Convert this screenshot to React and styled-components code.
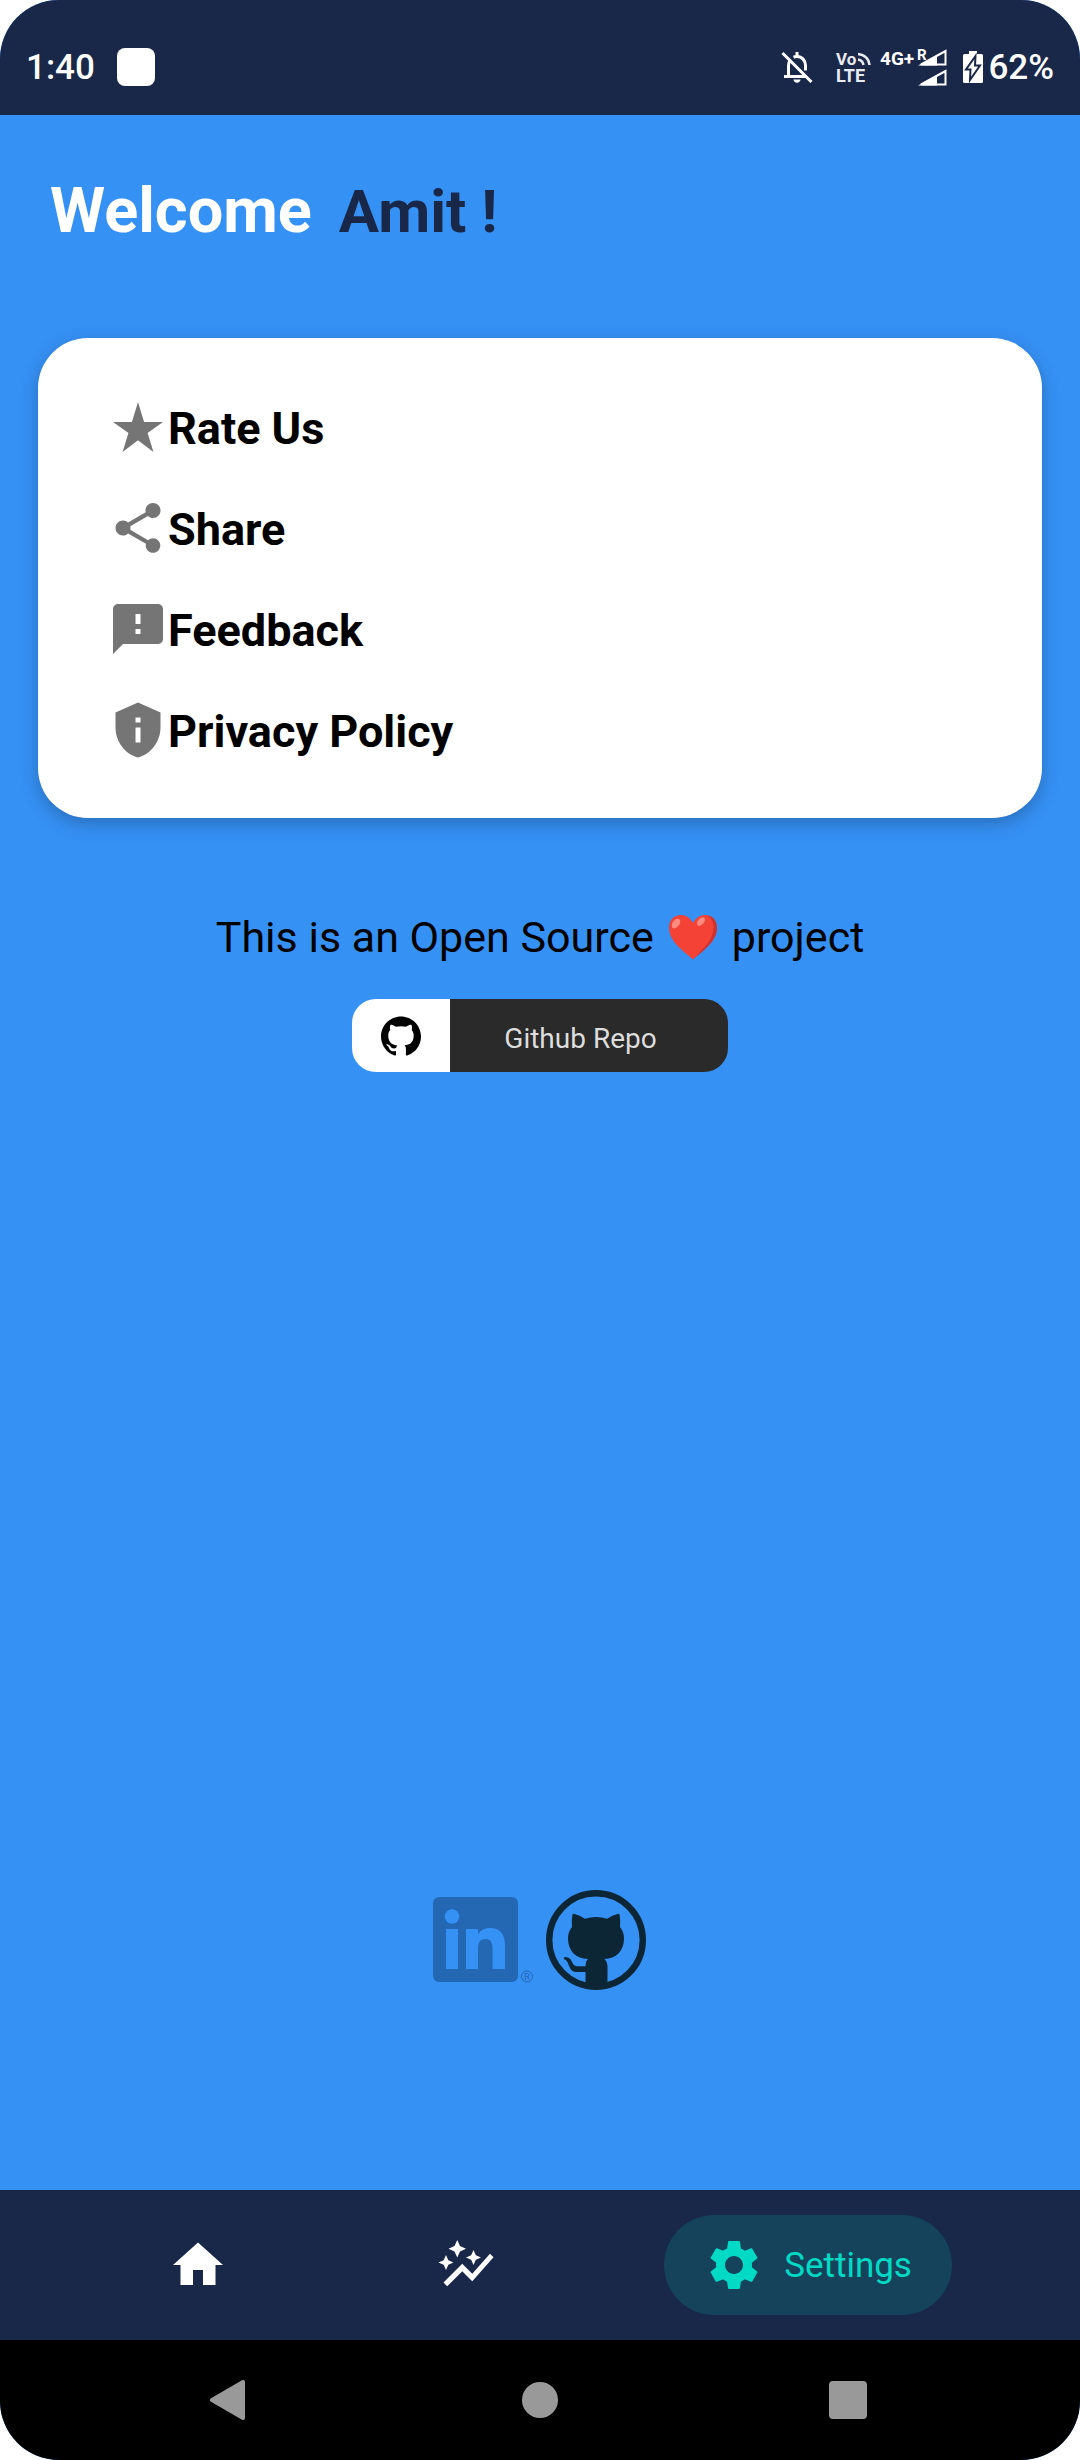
import React from 'react';
import styled, { createGlobalStyle } from 'styled-components';
import {
  MdStarRate,
  MdShare,
  MdFeedback,
  MdPrivacyTip,
  MdHome,
  MdAutoGraph,
  MdSettings,
} from 'react-icons/md';

const color = {
  navy: '#192849',
  blue: '#3691f5',
  white: '#ffffff',
  black: '#000000',
  icon: '#757575',
  accent: '#03dac5',
  pill: '#15435c',
  system: '#999999',
  octocat: '#0d2636',
  linkedin: '#2467b3',
  repo: '#2a2a2a',
};

const GlobalStyle = createGlobalStyle`
  *, *::before, *::after { box-sizing: border-box; }
  body {
    margin: 0;
    background: ${color.white};
    font-family: Roboto, "Noto Sans", sans-serif;
    color: ${color.black};
  }
  button {
    margin: 0;
    padding: 0;
    border: 0;
    background: none;
    font: inherit;
    color: inherit;
    cursor: pointer;
  }
  a { color: inherit; text-decoration: none; }
  svg { display: block; flex: none; }
`;

const Screen = styled.div`
  display: flex;
  flex-direction: column;
  min-height: 100vh;
  overflow: hidden;
  border-radius: 59px;
  background: ${color.blue};
`;

const StatusBar = styled.header`
  display: flex;
  justify-content: space-between;
  align-items: center;
  height: 115px;
  padding: 18px 26px 0;
  background: ${color.navy};
  color: ${color.white};
`;

const StatusGroup = styled.div`
  display: flex;
  align-items: center;
  gap: ${(p) => p.$gap}px;
`;

const StatusText = styled.span`
  padding-top: 3px;
  font-size: 35px;
  line-height: 44px;
  font-weight: 500;
`;

const NotificationDot = styled.span`
  width: 38px;
  height: 38px;
  border-radius: 8px;
  background: ${color.white};
`;

const Main = styled.main`
  flex: 1;
  display: flex;
  flex-direction: column;
  align-items: center;
  padding: 58px 38px 200px;
`;

const Greeting = styled.h1`
  align-self: stretch;
  display: flex;
  align-items: baseline;
  gap: 27px;
  margin: 0 0 90px;
  padding-left: 12px;
  font-size: 63px;
  line-height: 75px;
  font-weight: 700;
  color: ${color.white};
`;

const UserName = styled.span`
  font-size: 60px;
  line-height: 70px;
  color: ${color.navy};
`;

const Card = styled.section`
  align-self: stretch;
  display: flex;
  flex-direction: column;
  align-items: flex-start;
  gap: 38px;
  padding: 59px 70px 55px;
  border-radius: 50px;
  background: ${color.white};
  box-shadow: 0 6px 18px rgba(0, 0, 0, 0.24);
`;

const CardRow = styled.button`
  display: flex;
  align-items: flex-start;
  font-size: 45px;
  line-height: 63px;
  font-weight: 700;

  svg { color: ${color.icon}; }
`;

const Note = styled.p`
  display: flex;
  align-items: center;
  gap: 14px;
  margin: 93px 0 36px;
  font-size: 43px;
  line-height: 52px;
`;

const RepoLink = styled.a`
  display: flex;
  overflow: hidden;
  width: 376px;
  height: 73px;
  border-radius: 24px;
  font-size: 28px;
  color: #dddddd;
`;

const RepoMark = styled.span`
  display: flex;
  align-items: center;
  justify-content: center;
  width: 98px;
  background: ${color.white};
  color: ${color.black};
`;

const RepoLabel = styled.span`
  flex: 1;
  display: flex;
  align-items: center;
  justify-content: center;
  padding: 5px 17px 0 0;
  background: ${color.repo};
`;

const Social = styled.div`
  display: flex;
  align-items: center;
  gap: 12px;
  margin-top: auto;
`;

const TabBar = styled.nav`
  display: flex;
  align-items: center;
  justify-content: space-evenly;
  height: 150px;
  background: ${color.navy};
`;

const Tab = styled.button`
  display: flex;
  align-items: center;
  gap: 20px;
  height: 100px;
  padding: 0 40px;
  border-radius: 50px;
  font-size: 35px;
  background: ${(p) => (p.$active ? color.pill : 'transparent')};
  color: ${(p) => (p.$active ? color.accent : color.white)};
`;

const SystemBar = styled.nav`
  display: flex;
  justify-content: center;
  height: 120px;
  background: ${color.black};
`;

const SystemButton = styled.button`
  display: flex;
  align-items: center;
  justify-content: center;
  width: 308px;
  max-width: 33%;
`;

function BellOff() {
  return (
    <svg width="32" height="32" viewBox="0 0 32 32" fill="none" stroke="#fff" strokeWidth="3">
      <path d="M7.500 25.500V14.500c0-2.200.8-4.200 2.200-5.700M12.500 6.200c1.100-.5 2.300-.7 3.500-.7 5 0 8.500 4 8.500 9v5M3 25.500h22" />
      <path d="M16 1v4M1.500 2l29 29" />
      <path d="M12.500 28.500h7c0 2-1.600 3.200-3.500 3.200s-3.500-1.200-3.500-3.200z" fill="#fff" stroke="none" />
    </svg>
  );
}

function VoLte() {
  return (
    <svg width="36" height="40" viewBox="0 -3 36 40" fill="#e8ebf0" fontFamily="Roboto, sans-serif" fontWeight="700">
      <text x="1" y="15" fontSize="17">Vo</text>
      <text x="1" y="32" fontSize="18">LTE</text>
      <g fill="none" stroke="#e8ebf0" strokeWidth="2.500">
        <path d="M23 9.500c3 .5 5 2.500 5.500 5.500" />
        <path d="M23 4c6.500.5 11 5 11.500 11" />
      </g>
    </svg>
  );
}

function Signal() {
  return (
    <svg width="68" height="44" viewBox="0 -3 68 44" fill="#fff" fontFamily="Roboto, sans-serif" fontWeight="700">
      <text x="1" y="17" fontSize="19">4G+</text>
      <text x="38" y="12" fontSize="15">R</text>
      {[0, 20].map((y) => (
        <g key={y}>
          <path d={`M42 ${y + 16.500}L66.500 ${y + 3}v13.500z`} fill="none" stroke="#fff" strokeWidth="2" />
          <path d={`M39 ${y + 17.500}L58 ${y + 7}v10.500z`} />
        </g>
      ))}
    </svg>
  );
}

function Battery() {
  return (
    <svg width="20" height="32" viewBox="0 0 20 32">
      <path d="M6 0h8v3h4.500q1.500 0 1.500 1.500v26q0 1.500-1.500 1.500h-17q-1.500 0-1.500-1.500v-26q0-1.500 1.500-1.500H6z" fill="#fff" />
      <path d="M12.500 5L3 18.500h4.500L7 29l10-14.500h-5z" fill="#fff" stroke={color.navy} strokeWidth="2" />
    </svg>
  );
}

function Heart() {
  return (
    <svg width="50" height="46" viewBox="0 0 50 46">
      <path d="M25 45.500C17 38 1 28 1 14 1 6 6 1 13 1c5 0 9.500 3 12 8 2.500-5 7-8 12-8 7 0 12 5 12 13 0 14-16 24-24 31.500z" fill="#f44336" />
      <path d="M39 1.200C45 2 49 7 49 14c0 14-16 24-24 31.500C34 35 45 27 45.500 14 45.700 8 43 3.500 39 1.200z" fill="#c33" />
      <ellipse cx="8" cy="9.500" rx="3.500" ry="5.500" transform="rotate(35 8 9.500)" fill="#ff8a80" />
      <ellipse cx="33" cy="7.500" rx="3" ry="5" transform="rotate(42 33 7.500)" fill="#ff8a80" />
    </svg>
  );
}

function GithubMark() {
  return (
    <svg width="40" height="40" viewBox="0 0 24 24" fill="currentColor">
      <path d="M12 .297c-6.630 0-12 5.373-12 12 0 5.303 3.438 9.800 8.205 11.385.6.113.82-.258.82-.577 0-.285-.01-1.040-.015-2.040-3.338.724-4.042-1.610-4.042-1.610C4.422 18.070 3.633 17.700 3.633 17.700c-1.087-.744.084-.729.084-.729 1.205.084 1.838 1.236 1.838 1.236 1.070 1.835 2.809 1.305 3.495.998.108-.776.417-1.305.76-1.605-2.665-.3-5.466-1.332-5.466-5.930 0-1.310.465-2.380 1.235-3.220-.135-.303-.54-1.523.105-3.176 0 0 1.005-.322 3.300 1.230.96-.267 1.980-.399 3-.405 1.020.006 2.040.138 3 .405 2.280-1.552 3.285-1.230 3.285-1.230.645 1.653.24 2.873.12 3.176.765.840 1.230 1.910 1.230 3.220 0 4.610-2.805 5.625-5.475 5.920.42.360.81 1.096.81 2.220 0 1.606-.015 2.896-.015 3.286 0 .315.21.69.825.57C20.565 22.092 24 17.592 24 12.297c0-6.627-5.373-12-12-12" />
    </svg>
  );
}

function LinkedinLogo() {
  return (
    <svg width="102" height="100" viewBox="0 0 102 100">
      <rect x="1" y="7" width="85" height="85" rx="6" fill={color.linkedin} />
      <g fill={color.blue}>
        <circle cx="20" cy="26.500" r="7.300" />
        <rect x="14" y="39" width="12" height="40" />
        <path d="M34 39h12v5.500c2-4 6.500-6.500 12-6.500 11 0 15 7 15 18v23H60.500V59c0-6-1.500-10-7-10s-7.500 4-7.500 10v20H34z" />
      </g>
      <circle cx="95" cy="86.500" r="5.500" fill="none" stroke={color.linkedin} />
      <text x="95" y="90" fontSize="9" textAnchor="middle" fill={color.linkedin}>R</text>
    </svg>
  );
}

function Octocat() {
  return (
    <svg width="102" height="100" viewBox="0 0 102 100" fill={color.octocat}>
      <circle cx="50" cy="50" r="46.800" fill="none" stroke={color.octocat} strokeWidth="6.400" />
      <path d="M26.500 24.500q.5-1 2-.5 5 1.200 10.500 4.800 5-1.800 11-1.800t11 1.800q5.500-3.600 10.500-4.800 1.500-.5 2 .5 1.300 5.500.5 12.500 4 4.500 4 11.500c0 13-8 20-19.500 20.500q3 3 3 8V96q-11 3-22 0V82h-9.500c-8 0-6.500-12-12-12.700q-.8-2 1.500-2.300c7.500 0 5.500 9 11.500 9.300h8.500q0-5 2.500-7.300C30 68.500 22 61.500 22 48.500q0-7 4-11.500-.8-7 .5-12.500z" />
    </svg>
  );
}

const menu = [
  { label: 'Rate Us', Icon: MdStarRate },
  { label: 'Share', Icon: MdShare },
  { label: 'Feedback', Icon: MdFeedback },
  { label: 'Privacy Policy', Icon: MdPrivacyTip },
];

export default function App() {
  return (
    <>
      <GlobalStyle />
      <Screen>
        <StatusBar>
          <StatusGroup $gap={22}>
            <StatusText>1:40</StatusText>
            <NotificationDot />
          </StatusGroup>
          <StatusGroup $gap={16}>
            <StatusGroup $gap={22}>
              <BellOff />
              <StatusGroup $gap={8}>
                <VoLte />
                <Signal />
              </StatusGroup>
            </StatusGroup>
            <StatusGroup $gap={5}>
              <Battery />
              <StatusText>62%</StatusText>
            </StatusGroup>
          </StatusGroup>
        </StatusBar>

        <Main>
          <Greeting>
            Welcome <UserName>Amit !</UserName>
          </Greeting>

          <Card>
            {menu.map(({ label, Icon }) => (
              <CardRow key={label} type="button">
                <Icon size={60} />
                {label}
              </CardRow>
            ))}
          </Card>

          <Note>
            <span>This is an Open Source</span>
            <Heart />
            <span>project</span>
          </Note>

          <RepoLink href="#repo">
            <RepoMark>
              <GithubMark />
            </RepoMark>
            <RepoLabel>Github Repo</RepoLabel>
          </RepoLink>

          <Social>
            <a href="#linkedin" aria-label="LinkedIn">
              <LinkedinLogo />
            </a>
            <a href="#github" aria-label="GitHub">
              <Octocat />
            </a>
          </Social>
        </Main>

        <TabBar>
          <Tab type="button" aria-label="Home">
            <MdHome size={60} />
          </Tab>
          <Tab type="button" aria-label="Statistics">
            <MdAutoGraph size={60} />
          </Tab>
          <Tab type="button" $active>
            <MdSettings size={60} />
            Settings
          </Tab>
        </TabBar>

        <SystemBar>
          <SystemButton type="button" aria-label="Back">
            <svg width="44" height="44" viewBox="0 0 44 44">
              <path d="M2 22L33 4v36z" fill={color.system} stroke={color.system} strokeWidth="4" strokeLinejoin="round" />
            </svg>
          </SystemButton>
          <SystemButton type="button" aria-label="Home screen">
            <svg width="36" height="36" viewBox="0 0 36 36">
              <circle cx="18" cy="18" r="18" fill={color.system} />
            </svg>
          </SystemButton>
          <SystemButton type="button" aria-label="Recent apps">
            <svg width="38" height="38" viewBox="0 0 38 38">
              <rect width="38" height="38" rx="4" fill={color.system} />
            </svg>
          </SystemButton>
        </SystemBar>
      </Screen>
    </>
  );
}
